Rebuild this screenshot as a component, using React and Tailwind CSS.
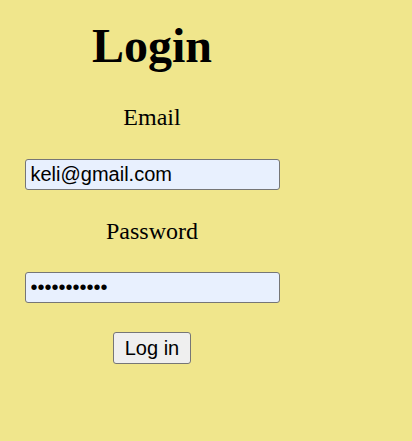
import React from 'react';

const App = () => {
    return (
        <div className="min-h-[441px] w-full bg-[#f0e68c] text-black">
            <form className="w-[304px] flex flex-col items-center pt-[18px]" onSubmit={(e) => e.preventDefault()}>
                <h1 className="font-['Liberation_Serif',serif] text-[48px] font-bold leading-[55px]">Login</h1>
                <label htmlFor="email" className="mt-[30px] font-['Liberation_Serif',serif] text-[24px] leading-[28px]">Email</label>
                <input
                    id="email"
                    type="email"
                    defaultValue="keli@gmail.com"
                    className="mt-[28px] w-[255px] h-[31px] px-[5px] bg-[#e8f0fe] border border-[#767676] rounded-[3px] font-['Liberation_Sans',Arial,sans-serif] text-[20px] leading-[23px] outline-none"
                />
                <label htmlFor="password" className="mt-[27px] font-['Liberation_Serif',serif] text-[24px] leading-[28px]">Password</label>
                <input
                    id="password"
                    type="password"
                    defaultValue="keli1234567"
                    className="mt-[27px] w-[255px] h-[31px] px-[5px] bg-[#e8f0fe] border border-[#767676] rounded-[3px] font-['Liberation_Sans',Arial,sans-serif] text-[20px] leading-[23px] outline-none"
                />
                <button
                    type="submit"
                    className="mt-[29px] w-[78px] h-[32px] bg-[#efefef] border border-[#767676] rounded-[3px] font-['Liberation_Sans',Arial,sans-serif] text-[20px] leading-[23px]"
                >
                    Log in
                </button>
            </form>
        </div>
    );
};

export default App;
